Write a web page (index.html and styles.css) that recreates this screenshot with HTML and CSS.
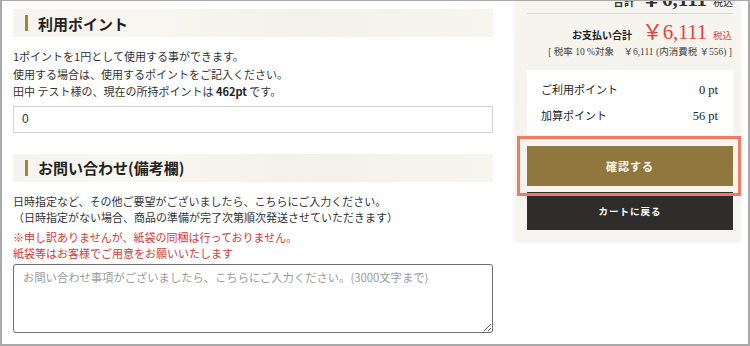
FILE: index.html
```html
<!DOCTYPE html>
<html lang="ja">
<head>
<meta charset="utf-8">
<link rel="stylesheet" href="styles.css">
</head>
<body>
<div class="frame">
  <div class="main">
    <h2 class="heading"><span class="bar"></span>利用ポイント</h2>
    <div class="text first">
      <p>1ポイントを1円として使用する事ができます。</p>
      <p>使用する場合は、使用するポイントをご記入ください。</p>
      <p>田中 テスト様の、現在の所持ポイントは <b>462pt</b> です。</p>
    </div>
    <input class="field" type="text" value="0">
    <h2 class="heading second"><span class="bar"></span>お問い合わせ(備考欄)</h2>
    <div class="text note">
      <p>日時指定など、その他ご要望がございましたら、こちらにご入力ください。</p>
      <p>（日時指定がない場合、商品の準備が完了次第順次発送させていただきます）</p>
    </div>
    <div class="text warn">
      <p>※申し訳ありませんが、紙袋の同梱は行っておりません。</p>
      <p>紙袋等はお客様でご用意をお願いいたします</p>
    </div>
    <textarea class="memo" placeholder="お問い合わせ事項がございましたら、こちらにご入力ください。(3000文字まで)"></textarea>
  </div>
  <aside class="panel">
    <div class="total-row">
      <span class="t-label">合計</span><span class="t-price">￥6,111</span><span class="t-tax">税込</span>
    </div>
    <div class="pay-row">
      <span class="p-label">お支払い合計</span><span class="p-price">￥6,111</span><span class="p-tax">税込</span>
    </div>
    <div class="tax-line">[ 税率 10 %対象　￥6,111 (内消費税 ￥556) ]</div>
    <div class="points">
      <div class="pt-row"><span>ご利用ポイント</span><span class="num">0 pt</span></div>
      <div class="pt-row"><span>加算ポイント</span><span class="num">56 pt</span></div>
    </div>
    <button class="btn confirm">確認する</button>
    <button class="btn back">カートに戻る</button>
    <div class="highlight"></div>
  </aside>
</div>
</body>
</html>
```

FILE: styles.css
```css
* { box-sizing: border-box; }
html, body { margin: 0; padding: 0; background: #fff; }
body {
  font-family: "Noto Sans CJK JP", "Noto Sans", sans-serif;
  color: #333;
}
.frame {
  width: 750px;
  height: 346px;
  border: 2px solid #a9a9a9;
  border-top-width: 1px;
  overflow: hidden;
  display: flex;
  gap: 22px;
  padding: 8px 0 0 11px;
  background: #fff;
}
.main { width: 480px; flex: none; }
.heading {
  margin: 0;
  height: 28px;
  display: flex;
  align-items: center;
  gap: 10px;
  padding-left: 12px;
  font-size: 15px;
  font-weight: bold;
  color: #222;
  background: linear-gradient(90deg, #f6f4ee 0%, #f8f6f0 30%, #f4f1ea 60%, #f7f5ef 100%);
}
.heading.second { margin-top: 21px; }
.bar { width: 3px; height: 16px; background: #9e8546; flex: none; }
.text p { margin: 0; }
.text { font-size: 11px; }
.first { margin-top: 11px; line-height: 17.5px; }
.first b { font-weight: bold; color: #222; }
.field {
  display: block;
  width: 480px;
  height: 27px;
  margin-top: 5px;
  border: 1px solid #d2d2d2;
  padding: 0 8px;
  font-family: "Liberation Sans", "Noto Sans CJK JP", sans-serif;
  font-size: 12px;
  color: #333;
  background: #fff;
}
.note { margin-top: 11px; line-height: 16px; }
.warn { margin-top: 4px; line-height: 16px; color: #d23a36; }
.memo {
  display: block;
  width: 480px;
  height: 69px;
  margin-top: 3px;
  border: 1.5px solid #6e6e6e;
  border-radius: 3px;
  padding: 4px 9px;
  font-family: "Noto Sans CJK JP", sans-serif;
  font-size: 11.3px;
  resize: vertical;
}
.memo::placeholder { color: #9a9a9a; }

.panel {
  position: relative;
  width: 225px;
  flex: none;
  margin-top: -25px;
  align-self: flex-start;
  padding: 0 7px 10px 12px;
  background: linear-gradient(180deg, #f7f5ef 0%, #f5f3ec 50%, #f7f5ef 100%);
  box-shadow: 0 2px 4px rgba(0,0,0,0.08);
  font-family: "Liberation Serif", "Noto Sans CJK JP", serif;
}
.total-row {
  height: 30px;
  display: flex;
  justify-content: flex-end;
  align-items: baseline;
  gap: 6px;
  padding-top: 2px;
  border-bottom: 1px solid #dcd8cf;
  line-height: 26px;
}
.t-label { font-size: 11px; font-weight: bold; color: #333; }
.t-price { font-size: 21px; color: #333; font-weight: bold; }
.t-tax { font-size: 10px; color: #333; }
.pay-row {
  margin-top: 6px;
  height: 24px;
  display: flex;
  justify-content: flex-end;
  align-items: baseline;
  line-height: 24px;
  padding-right: 1px;
}
.p-label { font-size: 10px; font-weight: bold; color: #222; margin-right: 10px; }
.p-price { font-size: 21px; color: #e4423e; letter-spacing: -0.3px; }
.p-tax { font-size: 9.5px; color: #e4423e; margin-left: 6px; }
.tax-line {
  height: 14px;
  line-height: 14px;
  margin-top: 1px;
  text-align: right;
  font-size: 9.5px;
  color: #444;
  padding-right: 1px;
}
.points {
  margin-top: 11px;
  background: #fff;
  padding: 7px 15px 6px 14px;
  width: 206px;
}
.pt-row {
  display: flex;
  justify-content: space-between;
  height: 26px;
  line-height: 26px;
  font-size: 11px;
  color: #222;
}
.pt-row .num { font-size: 12.5px; }
.btn {
  display: block;
  width: 206px;
  border: 0;
  color: #fff;
  font-family: "Noto Sans CJK JP", sans-serif;
  font-weight: bold;
  letter-spacing: 1px;
}
.confirm {
  margin-top: 11px;
  height: 40px;
  background: #8f773e;
  font-size: 11px;
}
.back {
  margin-top: 6px;
  height: 38px;
  background: #2e2d2c;
  font-size: 9.5px;
}
.highlight {
  position: absolute;
  left: 2px;
  top: 152px;
  width: 224px;
  height: 60px;
  border: 3px solid #ee7b62;
}
```
